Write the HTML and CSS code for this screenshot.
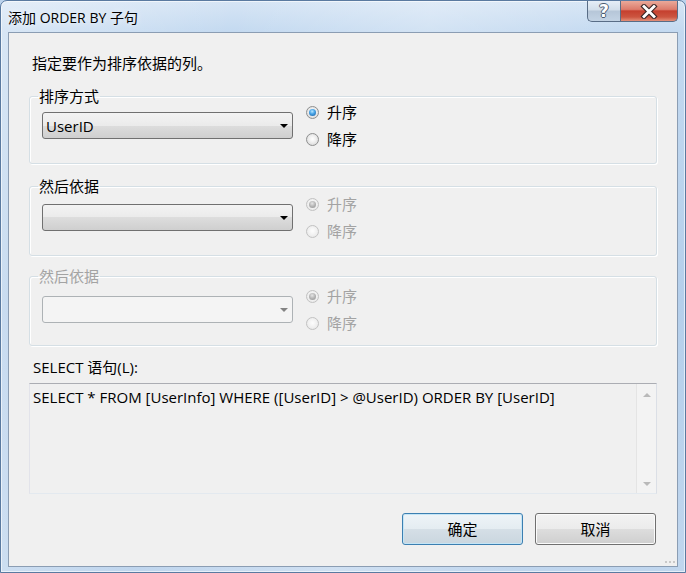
FILE: index.html
```html
<!DOCTYPE html>
<html lang="zh-CN">
<head>
<meta charset="utf-8">
<title>添加 ORDER BY 子句</title>
<link rel="stylesheet" href="styles.css">
</head>
<body>
<div class="window">
  <div class="titlebar">
    <span class="title">添加 ORDER BY 子句</span>
    <div class="caption">
      <div class="cbtn help"><span class="qmark">?</span></div>
      <div class="cbtn close">
        <svg width="18" height="15" viewBox="0 0 18 15">
          <path d="M4 2.5 L14 12.5 M14 2.5 L4 12.5" stroke="#3a2626" stroke-width="5" stroke-linecap="square"/>
          <path d="M4 2.5 L14 12.5 M14 2.5 L4 12.5" stroke="#ffffff" stroke-width="2.8" stroke-linecap="square"/>
        </svg>
      </div>
    </div>
  </div>
  <div class="client">
    <p class="intro">指定要作为排序依据的列。</p>

    <fieldset class="group g1">
      <legend>排序方式</legend>
      <div class="row">
        <div class="combo"><span class="val">UserID</span><i class="arrow"></i></div>
        <div class="radios">
          <div class="radio"><span class="rb on"></span>升序</div>
          <div class="radio"><span class="rb"></span>降序</div>
        </div>
      </div>
    </fieldset>

    <fieldset class="group g2">
      <legend>然后依据</legend>
      <div class="row">
        <div class="combo"><span class="val"></span><i class="arrow"></i></div>
        <div class="radios disabled">
          <div class="radio"><span class="rb on"></span>升序</div>
          <div class="radio"><span class="rb"></span>降序</div>
        </div>
      </div>
    </fieldset>

    <fieldset class="group g3 disabled">
      <legend>然后依据</legend>
      <div class="row">
        <div class="combo off"><span class="val"></span><i class="arrow"></i></div>
        <div class="radios disabled">
          <div class="radio"><span class="rb on"></span>升序</div>
          <div class="radio"><span class="rb"></span>降序</div>
        </div>
      </div>
    </fieldset>

    <div class="sql-label">SELECT 语句(L):</div>
    <div class="sqlbox">
      <div class="sqltext">SELECT * FROM [UserInfo] WHERE ([UserID] &gt; @UserID) ORDER BY [UserID]</div>
      <div class="vscroll"><i class="up"></i><i class="down"></i></div>
    </div>

    <div class="buttons">
      <button class="btn default">确定</button>
      <button class="btn">取消</button>
    </div>
    <div class="grip"><i></i><i></i><i></i></div>
  </div>
</div>
</body>
</html>
```
FILE: styles.css
```css
* { box-sizing: border-box; }
html, body { margin: 0; padding: 0; }
body {
  width: 686px;
  height: 573px;
  overflow: hidden;
  background: #bcd3ec;
  font-family: "Open Sans", "Noto Sans CJK SC", sans-serif;
  font-size: 15px;
  color: #000;
}
.window {
  width: 686px;
  height: 573px;
  border: 1px solid #5a7aa0;
  border-radius: 7px 7px 0 0;
  padding: 0 7px 5px;
  display: flex;
  flex-direction: column;
  background:
    linear-gradient(100deg, rgba(255,255,255,0.35) 0, rgba(255,255,255,0) 30%, rgba(255,255,255,0.25) 55%, rgba(255,255,255,0) 80%),
    linear-gradient(180deg, #d6e5f5 0, #c3d9f0 32px, #b5cfeb 300px, #c0d6ee 100%);
  box-shadow: inset 0 0 0 1px rgba(255,255,255,0.6);
}
.titlebar {
  height: 31px;
  flex: none;
  display: flex;
  align-items: flex-start;
}
.title {
  margin-top: 7px;
  font-size: 14px;
  line-height: 20px;
  text-shadow: 0 0 6px rgba(255,255,255,0.9);
}
.caption {
  margin-left: auto;
  display: flex;
  height: 21px;
}
.cbtn {
  height: 21px;
  border: 1px solid #596d86;
  border-top: none;
  display: flex;
  align-items: center;
  justify-content: center;
}
.help {
  width: 33px;
  border-right: none;
  border-radius: 0 0 0 5px;
  background: linear-gradient(180deg, #e6eef7 0, #d2deea 45%, #b6c6d8 50%, #c3d3e4 100%);
}
.qmark {
  font-family: "DejaVu Sans", sans-serif;
  font-weight: bold;
  font-size: 17px;
  line-height: 17px;
  color: #fff;
  text-shadow: 1px 0 0 #4a5b70, -1px 0 0 #4a5b70, 0 1px 0 #4a5b70, 0 -1px 0 #4a5b70;
}
.close {
  width: 58px;
  border-radius: 0 0 5px 0;
  background: linear-gradient(180deg, #eaa99a 0, #dc7c6c 42%, #c5402f 50%, #cc5540 80%, #e3907a 100%);
}
.client {
  flex: 1;
  background: #f0f0f0;
  border: 1px solid #8b9db3;
  padding: 20px 20px 0;
  display: flex;
  flex-direction: column;
}
.intro {
  margin: 0 0 3px 3px;
  line-height: 20px;
}
.group {
  margin: 12px 0 0;
  padding: 0 8px 14px;
  border: 1px solid #d5dfe5;
  border-radius: 3px;
  box-shadow: inset 1px 1px 0 #fff, 1px 1px 0 #fff;
  min-width: 0;
}
.group.g1 .row { margin-top: -2px; }
.group.g2 { margin-top: 14px; }
.group.g3 { padding-bottom: 12px; }
.group.g3 .row { margin-top: 2px; }
.group legend {
  padding: 0 1px;
  line-height: 16px;
}
.group.disabled legend { color: #a3a3a3; }
.row {
  display: flex;
  align-items: center;
}
.combo {
  width: 251px;
  height: 27px;
  margin-left: 4px;
  border: 1px solid #707070;
  border-radius: 3px;
  background: linear-gradient(180deg, #f3f3f3 0, #ebebeb 50%, #dddddd 50%, #cfcfcf 100%);
  display: flex;
  align-items: center;
  padding: 0 4px 0 3px;
}
.combo .val { flex: 1; line-height: 20px; }
.arrow {
  width: 0;
  height: 0;
  border-left: 4px solid transparent;
  border-right: 4px solid transparent;
  border-top: 4px solid #000;
}
.combo.off {
  border-color: #adb2b5;
  background: #f4f4f4;
}
.combo.off .arrow { border-top-color: #838383; }
.radios {
  margin-left: 13px;
  display: flex;
  flex-direction: column;
  gap: 7px;
}
.radio {
  display: flex;
  align-items: center;
  height: 20px;
  line-height: 20px;
}
.rb {
  width: 13px;
  height: 13px;
  margin-right: 8px;
  border-radius: 50%;
  border: 1px solid #8e8f8f;
  background: radial-gradient(circle at 50% 45%, #ffffff 0, #f0f0f0 40%, #cfcfcf 100%);
  display: flex;
  align-items: center;
  justify-content: center;
}
.rb.on::after {
  content: "";
  width: 7px;
  height: 7px;
  border-radius: 50%;
  background: radial-gradient(circle at 45% 35%, #b8e6ff 0, #4aa6e8 40%, #14589c 100%);
}
.radios.disabled .radio { color: #a3a3a3; }
.radios.disabled .rb {
  border-color: #c2c2c2;
  background: radial-gradient(circle at 50% 45%, #fdfdfd 0, #f1f1f1 50%, #e2e2e2 100%);
}
.radios.disabled .rb.on::after {
  background: radial-gradient(circle at 45% 35%, #e6e6e6 0, #b4b4b4 50%, #909090 100%);
}
.sql-label {
  margin: 11px 0 0 4px;
  line-height: 20px;
}
.sqlbox {
  margin-top: 6px;
  height: 111px;
  border: 1px solid;
  border-color: #abadb3 #dbdfe6 #e3e9ef #e2e3ea;
  background: #f0f0f0;
  display: flex;
}
.sqltext {
  flex: 1;
  padding: 3px;
  line-height: 20px;
}
.vscroll {
  width: 20px;
  border-left: 1px solid #e4e4e4;
  background: #f3f3f3;
  display: flex;
  flex-direction: column;
  align-items: center;
  justify-content: space-between;
  padding: 9px 0 7px;
}
.vscroll i {
  width: 0;
  height: 0;
  border-left: 4px solid transparent;
  border-right: 4px solid transparent;
}
.vscroll .up { border-bottom: 4px solid #b9b9b9; }
.vscroll .down { border-top: 4px solid #b9b9b9; }
.buttons {
  margin-top: 19px;
  display: flex;
  justify-content: flex-end;
  gap: 12px;
  padding-right: 1px;
}
.btn {
  width: 121px;
  height: 32px;
  padding: 0;
  font: inherit;
  line-height: 20px;
  color: #000;
  border: 1px solid #707070;
  border-radius: 3px;
  background: linear-gradient(180deg, #f3f3f3 0, #ebebeb 50%, #dddddd 50%, #cfcfcf 100%);
  box-shadow: inset 0 0 0 1px #fbfbfb;
}
.btn.default {
  border-color: #3c7fb1;
  box-shadow: inset 0 0 0 1px #c4e5f6;
  background: linear-gradient(180deg, #eef4f8 0, #e4ecf1 50%, #d5dfe6 50%, #cad6df 100%);
}
.grip {
  margin: auto -18px 3px auto;
  display: flex;
  gap: 2px;
}
.grip i {
  width: 2px;
  height: 2px;
  background: #c9c9c9;
}
```
